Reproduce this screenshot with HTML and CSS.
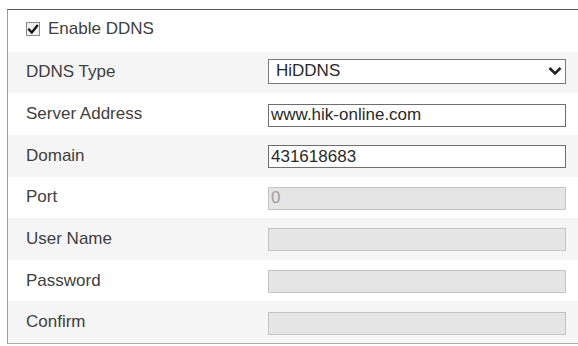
FILE: index.html
```html
<!DOCTYPE html>
<html>
<head>
<meta charset="utf-8">
<link rel="stylesheet" href="styles.css">
</head>
<body>
<div class="panel">
  <div class="row">
    <label class="check">
      <span class="box"><svg width="13" height="13" viewBox="0 0 13 13"><path d="M2.2 6.6 L5.2 9.8 L11 2.6" fill="none" stroke="#111" stroke-width="2.4" stroke-linecap="square"/></svg></span>
      <span class="check-text">Enable DDNS</span>
    </label>
  </div>
  <div class="row alt">
    <span class="label">DDNS Type</span>
    <div class="select"><span>HiDDNS</span><svg class="chev" width="14" height="10" viewBox="0 0 14 10"><path d="M1.5 2 L7 7.5 L12.5 2" fill="none" stroke="#222" stroke-width="2.6"/></svg></div>
  </div>
  <div class="row">
    <span class="label">Server Address</span>
    <input class="field" type="text" value="www.hik-online.com">
  </div>
  <div class="row alt">
    <span class="label">Domain</span>
    <input class="field" type="text" value="431618683">
  </div>
  <div class="row">
    <span class="label">Port</span>
    <input class="field off" type="text" value="0" disabled>
  </div>
  <div class="row alt">
    <span class="label">User Name</span>
    <input class="field off" type="text" value="" disabled>
  </div>
  <div class="row">
    <span class="label">Password</span>
    <input class="field off" type="password" value="" disabled>
  </div>
  <div class="row alt">
    <span class="label">Confirm</span>
    <input class="field off" type="password" value="" disabled>
  </div>
</div>
</body>
</html>
```

FILE: styles.css
```css
html, body {
  margin: 0;
  padding: 0;
  background: #ffffff;
}
body {
  font-family: "Liberation Sans", Arial, sans-serif;
  font-size: 17px;
  color: #404040;
}
.panel {
  margin: 9px 0 0 7px;
  height: 333px;
  border-top: 1px solid #555555;
  border-left: 1px solid #9a9a9a;
  border-bottom: 1px solid #aaaaaa;
  display: grid;
  grid-template-rows: repeat(8, 1fr);
}
.row {
  display: grid;
  grid-template-columns: 242px 298px;
  align-items: center;
  padding-left: 18px;
  box-sizing: border-box;
}
.row.alt {
  background: #f5f5f5;
}
.label {
  line-height: 20px;
}
.check {
  display: flex;
  align-items: center;
  gap: 8px;
  margin-top: -3px;
}
.box {
  width: 14px;
  height: 14px;
  box-sizing: border-box;
  border: 1px solid #8a8a8a;
  background: #f0f0f0;
  display: flex;
  align-items: center;
  justify-content: center;
}
.check-text {
  white-space: nowrap;
}
.select {
  width: 298px;
  height: 25px;
  box-sizing: border-box;
  border: 1px solid #7a7a7a;
  background: #ffffff;
  display: flex;
  align-items: center;
  justify-content: space-between;
  padding: 0 3px 0 7px;
  color: #2a2a2a;
  margin-top: -2px;
}
.chev {
  display: block;
}
.field {
  margin: 2px 0 0 0;
  width: 298px;
  height: 23px;
  box-sizing: border-box;
  border: 1px solid #6e6e6e;
  background: #ffffff;
  font-family: "Liberation Sans", Arial, sans-serif;
  font-size: 17px;
  color: #2a2a2a;
  padding: 0 2px;
  outline: none;
}
.field.off {
  background: #e5e5e5;
  border: 1px solid #c4c4c4;
  color: #a0a0a0;
}
```
